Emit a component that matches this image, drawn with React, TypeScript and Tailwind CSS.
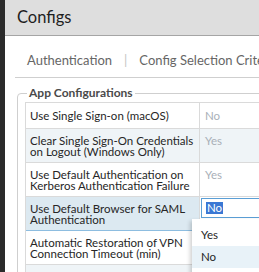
import { ReactNode } from 'react';

type Row = {
  label: ReactNode;
  value?: string;
  tall?: boolean;
  tone?: 'plain' | 'alt' | 'active';
};

const rows: Row[] = [
  { label: 'Use Single Sign-on (macOS)', value: 'No' },
  {
    label: (
      <>
        Clear Single Sign-On Credentials
        <br />
        on Logout (Windows Only)
      </>
    ),
    value: 'Yes',
    tall: true,
    tone: 'alt',
  },
  {
    label: (
      <>
        Use Default Authentication on
        <br />
        Kerberos Authentication Failure
      </>
    ),
    value: 'Yes',
    tall: true,
  },
  {
    label: (
      <>
        Use Default Browser for SAML
        <br />
        Authentication
      </>
    ),
    tall: true,
    tone: 'active',
  },
  {
    label: (
      <>
        Automatic Restoration of VPN
        <br />
        Connection Timeout (min)
      </>
    ),
    tall: true,
  },
  { label: '', tall: true, tone: 'alt' },
];

function ConfigRow({ row }: { row: Row }) {
  const pad = row.tall ? 'pt-[6px] pb-[5px]' : 'py-[7px]';
  const bg =
    row.tone === 'active' ? 'bg-[#dce9f1]' : row.tone === 'alt' ? 'bg-[#eff4f7]' : 'bg-white';
  const edge = row.tone === 'active' ? 'border-[#8dbde0]' : 'border-[#dadada]';

  return (
    <div className={`flex border-b ${edge} ${bg}`}>
      <div className={`min-h-[11px] w-[174px] shrink-0 border-r border-[#dadada] pl-[4px] ${pad} whitespace-nowrap text-[#262626]`}>
        {row.label}
      </div>
      {row.tone === 'active' ? (
        <div className="flex-1 bg-white pl-[1px] pt-[1px]">
          <div className="flex h-[20px] items-center border border-[#5b9fd6] bg-white pl-[4px]">
            <span className="bg-[#3a78d4] px-[1px] leading-[12px] text-white">No</span>
          </div>
        </div>
      ) : (
        <div className={`flex-1 pl-[5px] ${pad} text-[#a9b0b8]`}>{row.value}</div>
      )}
    </div>
  );
}

export default function App() {
  return (
    <div className="flex h-[272px] w-[259px] overflow-hidden bg-white font-['Lato',sans-serif]">
      <div className="w-[5px] shrink-0 bg-[#2b2b2b]" />

      <div className="w-[340px] shrink-0">
        <div className="flex h-[36px] items-center border-b border-[#a5a5a5] bg-[#dedede] pl-[12px] text-[16.5px] text-[#1f1f1f]">
          Configs
        </div>

        <div className="relative px-[10px]">
          <div className="flex items-center border-b border-[#cfcfcf] pb-[9px] pl-[12px] pt-[16px] text-[13px] leading-[16px] text-[#666]">
            <span>Authentication</span>
            <span className="mx-[12px] text-[#c4c4c4]">|</span>
            <span className="whitespace-nowrap">Config Selection Criteria</span>
          </div>

          <fieldset className="ml-[2px] mt-[8px] h-[200px] rounded-[4px] border border-[#cfcfcf] pl-[7px]">
            <legend className="ml-[2px] px-[2px] text-[12px] font-bold leading-[14px] text-[#4a4a4a]">
              App Configurations
            </legend>

            <div className="mt-[2px] border-l border-t border-[#dadada] text-[11.5px] leading-[11px]">
              {rows.map((row, i) => (
                <ConfigRow key={i} row={row} />
              ))}
            </div>
          </fieldset>

          <div className="absolute left-[187px] top-[183px] w-[80px] bg-white text-[11.5px] text-[#262626] shadow-[-2px_2px_4px_rgba(0,0,0,0.18)]">
            <div className="h-[5px]" />
            <div className="flex h-[22px] items-center pl-[9px]">Yes</div>
            <div className="flex h-[22px] items-center bg-[#e8f2f8] pl-[9px]">No</div>
            <div className="h-[20px]" />
          </div>
        </div>
      </div>
    </div>
  );
}
